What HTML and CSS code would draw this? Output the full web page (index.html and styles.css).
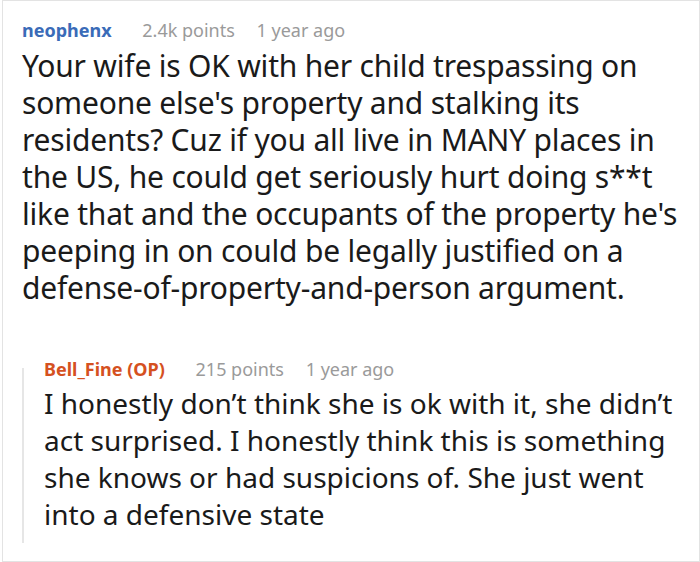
FILE: index.html
```html
<!DOCTYPE html>
<html>
<head>
<meta charset="utf-8">
<link rel="stylesheet" href="styles.css">
</head>
<body>
<div class="frame">
  <div class="comment">
    <div class="meta">
      <span class="author author-blue">neophenx</span>
      <span class="points">2.4k points</span>
      <span class="time">1 year ago</span>
    </div>
    <div class="text main-text">Your wife is OK with her child trespassing on<br>someone else's property and stalking its<br>residents? Cuz if you all live in MANY places in<br>the US, he could get seriously hurt doing s**t<br>like that and the occupants of the property he's<br>peeping in on could be legally justified on a<br>defense-of-property-and-person argument.</div>
  </div>
  <div class="reply">
    <div class="rail"></div>
    <div class="reply-body">
      <div class="meta">
        <span class="author author-op">Bell_Fine (OP)</span>
        <span class="points">215 points</span>
        <span class="time">1 year ago</span>
      </div>
      <div class="text reply-text">I honestly don’t think she is ok with it, she didn’t act surprised. I honestly think this is something she knows or had suspicions of. She just went into a defensive state</div>
    </div>
  </div>
</div>
</body>
</html>
```

FILE: styles.css
```css
html, body {
  margin: 0;
  padding: 0;
  background: #ffffff;
}
body {
  font-family: "Noto Sans", "Open Sans", sans-serif;
  color: #1a1a1a;
}
.frame {
  box-sizing: border-box;
  width: 698px;
  height: 562px;
  margin-left: 2px;
  border: 1px solid #e3e3e3;
  padding: 17px 0 0 19px;
  overflow: hidden;
}
.meta {
  font-size: 18px;
  line-height: 24px;
  white-space: nowrap;
}
.author {
  font-weight: 700;
  margin-right: 26px;
}
.author-blue { color: #3a6bb8; }
.author-op { color: #d5511f; }
.points {
  color: #9a9a9a;
  margin-right: 17px;
}
.time { color: #9a9a9a; }
.text {
  line-height: 37px;
}
.main-text {
  font-size: 30px;
  letter-spacing: -0.2px;
  margin-top: 5px;
}
.reply {
  display: grid;
  grid-template-columns: 2px 1fr;
  column-gap: 20px;
  margin-top: 51px;
}
.rail {
  background: #e6e6e6;
  margin-top: 11px;
}
.reply-body {
  padding-bottom: 10px;
}
.reply-text {
  font-size: 28px;
  margin-top: 4px;
}
```
